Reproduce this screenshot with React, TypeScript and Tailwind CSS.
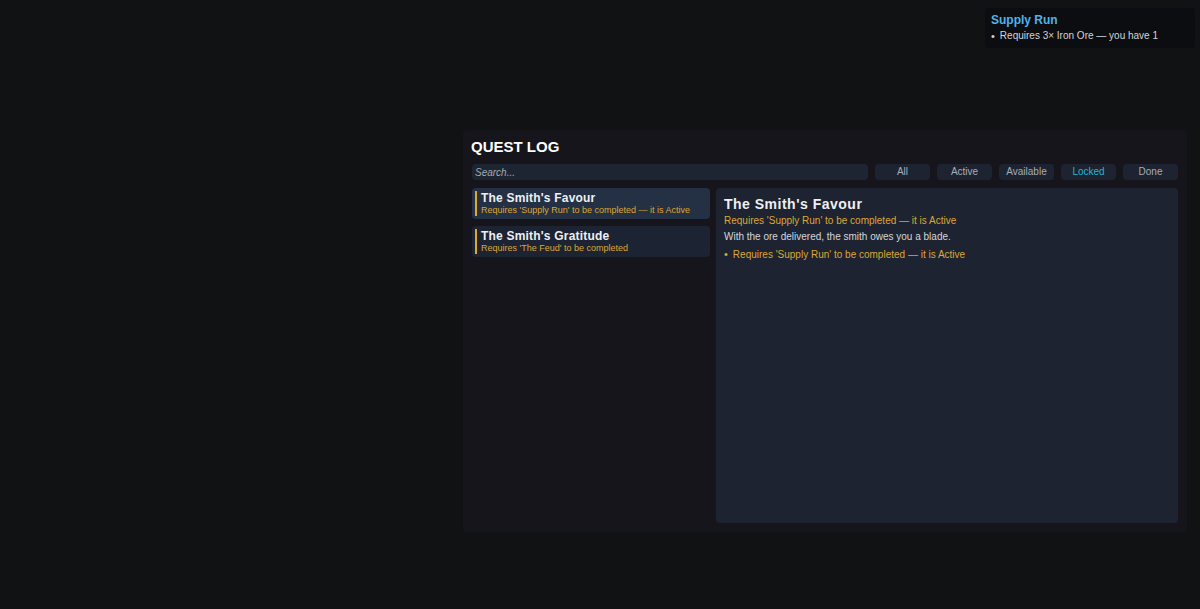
const FILTERS = ['All', 'Active', 'Available', 'Locked', 'Done'];

interface Quest {
  name: string;
  req: string;
  selected?: boolean;
}

const QUESTS: Quest[] = [
  { name: "The Smith's Favour", req: "Requires 'Supply Run' to be completed — it is Active", selected: true },
  { name: "The Smith's Gratitude", req: "Requires 'The Feud' to be completed" },
];

export default function App() {
  return (
    <div
      className="relative w-[1200px] h-[609px] bg-[#111214] overflow-hidden"
      style={{ fontFamily: '"Liberation Sans", Arial, sans-serif' }}
    >
      {/* Objective tracker tooltip */}
      <div className="absolute left-[985px] top-[8px] w-[210px] h-[40px] bg-[#0c0d10] rounded-sm px-[6px] pt-[5px]">
        <div className="text-[12px] leading-[14px] font-bold text-[#4fb3ea]">Supply Run</div>
        <div className="flex items-center gap-[5px] mt-[3px] text-[10px] leading-[12px] text-[#d2d5da]">
          <span className="text-[11px]">•</span>
          <span>Requires 3× Iron Ore — you have 1</span>
        </div>
      </div>

      {/* Quest log panel */}
      <div className="absolute left-[463px] top-[130px] w-[724px] h-[402px] bg-[#16151b] rounded-sm px-[9px] pt-[8px] pb-[9px] flex flex-col">
        <h1 className="text-[15px] leading-[18px] font-bold text-white -ml-[1px]">QUEST LOG</h1>
        <div className="flex gap-[7px] mt-[8px] h-[16px]">
          <input
            className="flex-1 bg-[#1d2533] rounded-sm px-[3px] text-[10px] italic text-[#c8ccd2] placeholder:text-[#a3abb8] outline-none"
            placeholder="Search..."
          />
          {FILTERS.map((f) => (
            <button
              key={f}
              className={`w-[55px] bg-[#1d2330] rounded-sm text-[10px] leading-[16px] ${
                f === 'Locked' ? 'text-[#22b5d0]' : 'text-[#a7adb6]'
              }`}
            >
              {f}
            </button>
          ))}
        </div>

        <div className="flex gap-[6px] mt-[8px] flex-1">
          {/* Quest list */}
          <div className="w-[238px] flex flex-col gap-[7px]">
            {QUESTS.map((q) => (
              <div
                key={q.name}
                className={`h-[31px] rounded-sm flex py-[3px] pl-[3px] ${
                  q.selected ? 'bg-[#243044]' : 'bg-[#1c2434]'
                }`}
              >
                <div className="w-[2px] bg-[#e0a92a] mr-[4px]" />
                <div className="flex flex-col">
                  <div className="text-[12px] leading-[14px] font-bold text-[#eef0f3] tracking-[0.2px]">{q.name}</div>
                  <div className="text-[9px] leading-[11px] text-[#dea734]">{q.req}</div>
                </div>
              </div>
            ))}
          </div>

          {/* Quest detail */}
          <div className="flex-1 bg-[#1d2330] rounded-sm px-[8px] pt-[8px]">
            <div className="text-[14px] leading-[17px] font-bold text-[#eef0f3] tracking-[0.5px]">The Smith's Favour</div>
            <div className="text-[10px] leading-[13px] text-[#dea734] mt-[1px]">
              Requires 'Supply Run' to be completed — it is Active
            </div>
            <div className="text-[10px] leading-[13px] text-[#d4d7dc] mt-[3px]">
              With the ore delivered, the smith owes you a blade.
            </div>
            <div className="flex items-center gap-[5px] mt-[5px] text-[10px] leading-[13px] text-[#dea734]">
              <span className="text-[11px]">•</span>
              <span>Requires 'Supply Run' to be completed — it is Active</span>
            </div>
          </div>
        </div>
      </div>
    </div>
  );
}
